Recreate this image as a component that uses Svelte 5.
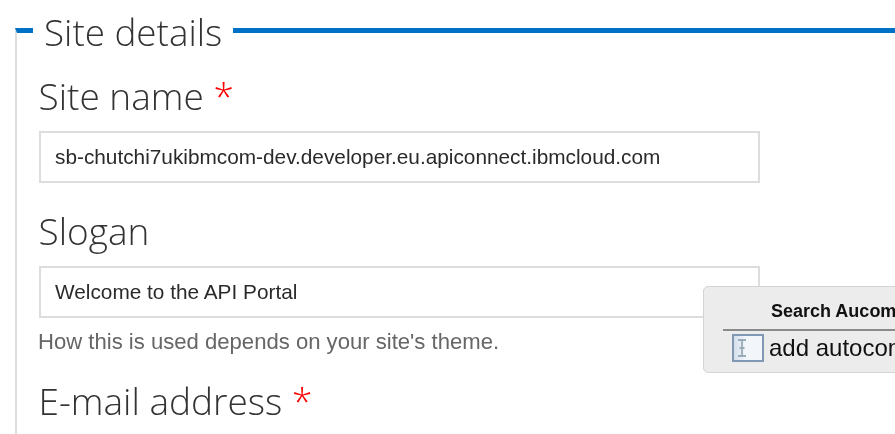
<script>
  const fields = [
    { label: 'Site name', required: true, value: 'sb-chutchi7ukibmcom-dev.developer.eu.apiconnect.ibmcloud.com' },
    { label: 'Slogan', required: false, value: 'Welcome to the API Portal', hint: "How this is used depends on your site's theme." }
  ];
</script>

<div class="page">
  <fieldset class="details">
    <legend>Site details</legend>
    {#each fields as f}
      <div class="field">
        <label class="label">{f.label}{#if f.required}{' '}<span class="req">*</span>{/if}</label>
        <input class="box" value={f.value} />
        {#if f.hint}<p class="hint">{f.hint}</p>{/if}
      </div>
    {/each}
    <div class="field">
      <label class="label">E-mail address{' '}<span class="req">*</span></label>
    </div>
  </fieldset>

  <div class="popup">
    <div class="title">Search Aucomplete</div>
    <div class="rule"></div>
    <div class="row">
      <span class="iconbox">
        <svg width="14" height="20" viewBox="0 0 14 20" fill="none" stroke="#9aabb9" stroke-width="1.8">
          <path d="M3 2h8M3 18h8M7 2v16M4.5 10h5" />
        </svg>
      </span>
      <span class="rowtext">add autocomplete</span>
    </div>
  </div>
</div>

<style>
  :global(body) {
    margin: 0;
    background: #fff;
    overflow: hidden;
  }
  .page {
    position: relative;
    box-sizing: border-box;
    width: 895px;
    height: 434px;
    padding-top: 5px;
    overflow: hidden;
    font-family: "Liberation Sans", Arial, sans-serif;
    filter: blur(0.35px);
  }
  .details {
    box-sizing: border-box;
    margin: 0 0 0 15px;
    padding: 18px 0 0;
    min-width: 0;
    width: 900px;
    height: 480px;
    border: 0;
    border-left: 2px solid #ddd;
    border-top: 5px solid #0071c5;
  }
  legend {
    margin-left: 16px;
    padding: 4px 11px 0;
    font-family: "Open Sans", sans-serif;
    font-weight: 300;
    font-size: 36.8px;
    line-height: 46px;
    color: #333;
  }
  .field {
    margin: 0 0 25px 22px;
  }
  .label {
    display: block;
    margin-left: -0.5px;
    font-family: "Open Sans", sans-serif;
    font-weight: 300;
    font-size: 37px;
    line-height: 46px;
    color: #333;
    margin-bottom: 12px;
  }
  .req {
    color: #f00;
  }
  .box {
    display: block;
    box-sizing: border-box;
    width: 721px;
    height: 52px;
    padding: 0 14px;
    border: 2px solid #ddd;
    border-radius: 0;
    outline: 0;
    font-family: "Liberation Sans", Arial, sans-serif;
    font-size: 20.8px;
    color: #2a2a2a;
  }
  .hint {
    margin: 12px 0 0 -1px;
    font-size: 22.1px;
    line-height: 23px;
    color: #666;
  }
  .popup {
    position: absolute;
    left: 703px;
    top: 286px;
    width: 220px;
    height: 87px;
    box-sizing: border-box;
    background: #ececec;
    border: 1px solid #d4d4d4;
    border-radius: 5px;
  }
  .title {
    margin: 14px 0 0 67px;
    font-size: 18px;
    line-height: 20px;
    font-weight: 700;
    color: #111;
    white-space: nowrap;
  }
  .rule {
    margin: 8px 0 0 19px;
    height: 2px;
    background: #8a8a8a;
  }
  .row {
    display: flex;
    align-items: center;
    gap: 5px;
    margin: 3px 0 0 28px;
    white-space: nowrap;
  }
  .iconbox {
    box-sizing: border-box;
    flex: none;
    width: 32px;
    height: 28px;
    display: flex;
    align-items: center;
    padding-left: 1px;
    background: linear-gradient(90deg, #d5dfeb, #f2f5fa 40%);
    border: 2px solid #8098b3;
  }
  .rowtext {
    font-size: 24px;
    color: #111;
  }
</style>
